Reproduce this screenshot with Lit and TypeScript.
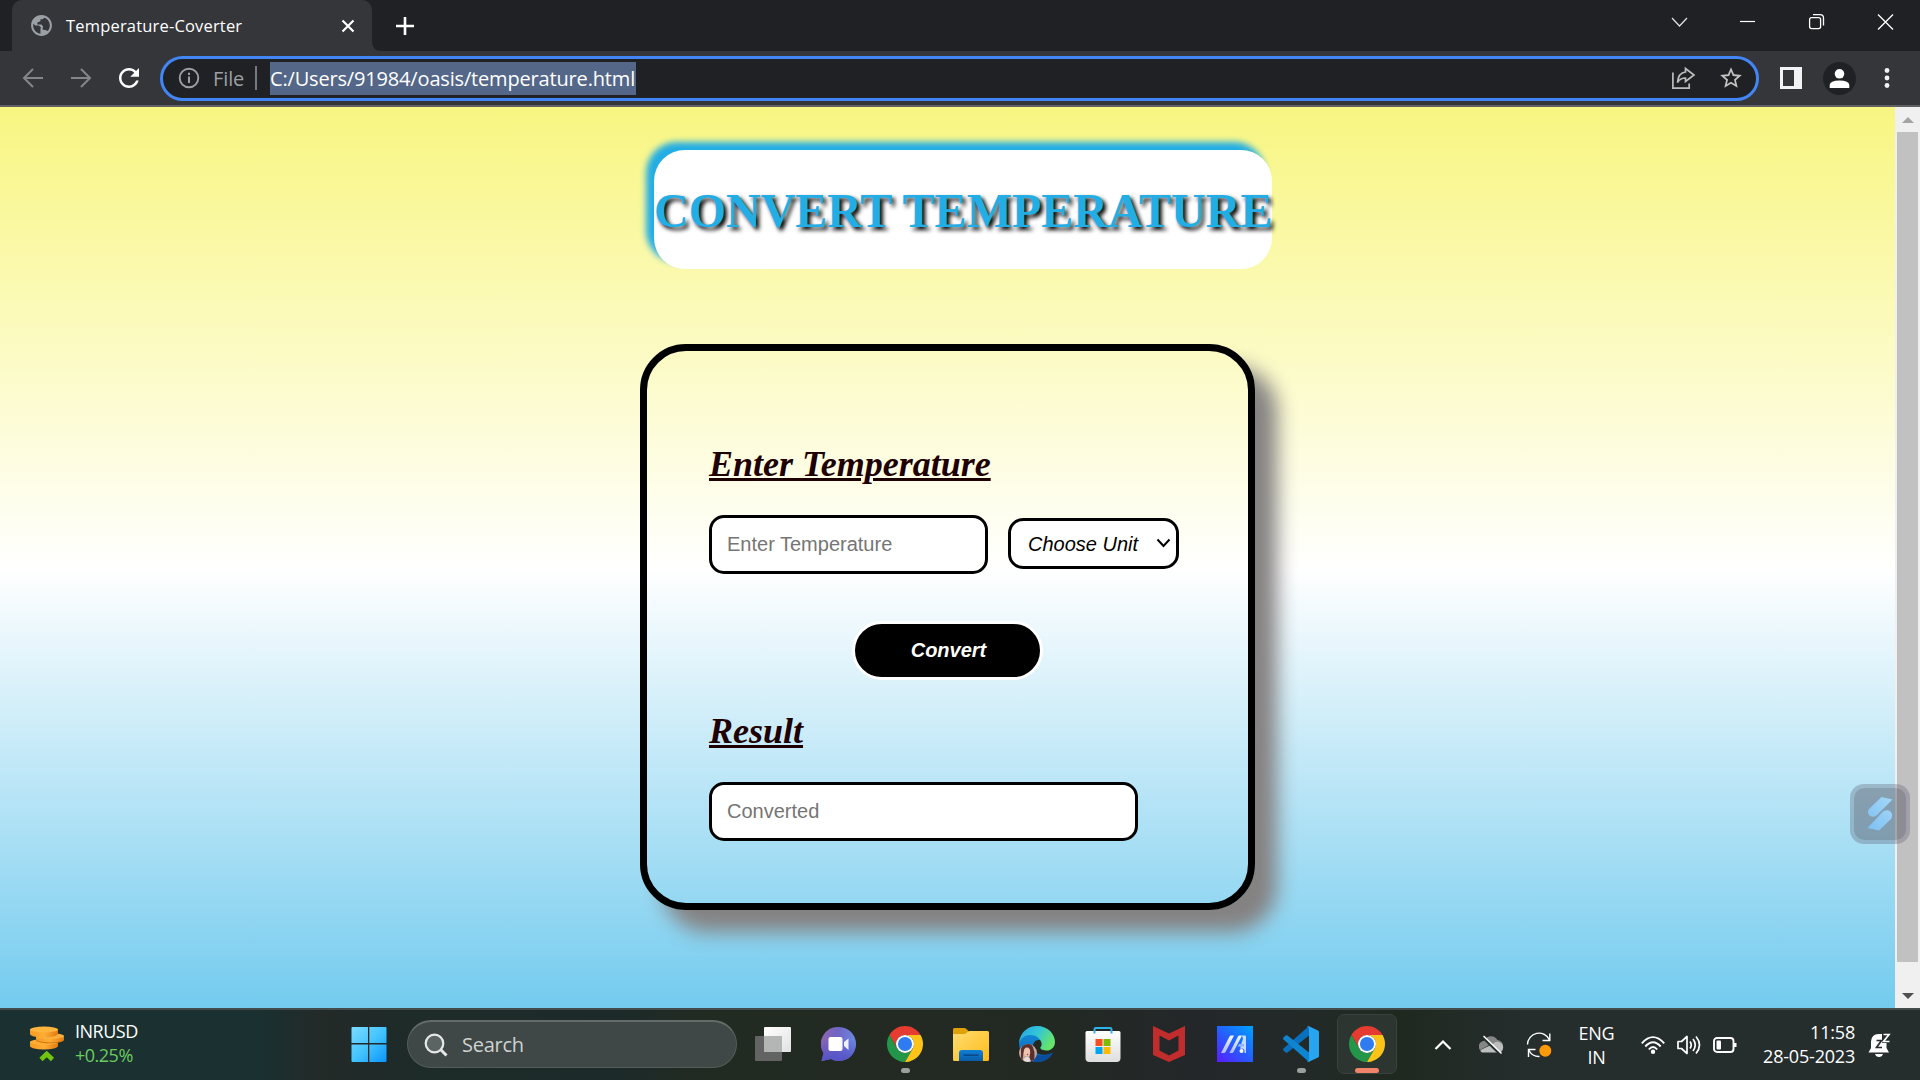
import { LitElement, html, css } from "lit";
import { customElement } from "lit/decorators.js";

const chrome = html`<svg class="app" viewBox="0 0 48 48">
  <path fill="#e53b30" d="M24 12H44.78A24 24 0 0 0 3.22 12L13.61 30A12 12 0 0 1 24 12Z"/>
  <path fill="#23964a" d="M13.61 30L3.22 12A24 24 0 0 0 24 48L34.39 30A12 12 0 0 1 13.61 30Z"/>
  <path fill="#fcc419" d="M34.39 30L24 48A24 24 0 0 0 44.78 12H24A12 12 0 0 1 34.39 30Z"/>
  <circle cx="24" cy="24" r="12" fill="#fff"/><circle cx="24" cy="24" r="9.4" fill="#2f7bf0"/>
</svg>`;

const folder = html`<svg class="app" viewBox="0 0 36 36">
  <defs><linearGradient id="fo" x1="0" y1="0" x2="1" y2="1"><stop offset="0" stop-color="#ffdc72"/><stop offset="1" stop-color="#fdbc18"/></linearGradient>
  <linearGradient id="fb" x1="0" y1="0" x2="0" y2="1"><stop offset="0" stop-color="#0f7fd6"/><stop offset="1" stop-color="#0a5da8"/></linearGradient></defs>
  <path fill="#e0a008" d="M0 3.500Q0 2 1.500 2H11.500Q12.500 2 13.200 2.700L15.500 5V12H0Z"/>
  <path fill="url(#fo)" d="M0 8H11Q12.500 8 13.500 7L14.500 6Q15.500 5 17 5H34.500Q36 5 36 6.500V33.500Q36 35 34.500 35H1.500Q0 35 0 33.500Z"/>
  <path fill="url(#fb)" d="M6 35V27Q6 24 9 24H27Q30 24 30 27V35Z"/>
  <rect x="10.500" y="28.500" width="15" height="1.300" fill="#08437c"/>
</svg>`;

const edge = html`<svg class="app" viewBox="0 0 36 36">
  <defs><linearGradient id="eg" x1="0" y1="0" x2="1" y2=".45"><stop offset="0" stop-color="#2a9fe0"/><stop offset=".5" stop-color="#30c4dc"/><stop offset="1" stop-color="#66e36a"/></linearGradient>
  <linearGradient id="eb" x1="0" y1="0" x2="0" y2="1"><stop offset="0" stop-color="#128ad6"/><stop offset="1" stop-color="#0b5cae"/></linearGradient>
  <clipPath id="ea"><circle cx="9" cy="27" r="9"/></clipPath></defs>
  <path fill="url(#eb)" d="M0 17C1 10 7 7.500 12 8C18 8.500 22 11 22 14.500C17 13 14 16 14 21C14 28 24 31 33.500 27C30 33 25 36 18 36C8 36 0 28 0 17Z"/>
  <path fill="#0c4c9c" d="M12 19C10 28 21 33 34 26.500C31 33 25 36 18 36C13 34 9 27 12 19Z"/>
  <path fill="url(#eg)" d="M0 17C1 6 9 0 18 0C29 0 36 8 36 16C36 22 31 25 27 24.500C23 24.300 21 23 21.300 21.600C22 20.700 23 19.500 22.500 17C21.500 12 16 8.500 11 9C6 9 2 12 0 17Z"/>
  <g clip-path="url(#ea)"><rect y="18" width="18" height="18" fill="#c2a79b"/>
  <path fill="#5b302c" d="M4 18H12Q17 24 15 36H9Q13 29 8 22Q4 24 4 31L3 36H2V23Z"/>
  <ellipse cx="8" cy="26" rx="3.200" ry="4.500" fill="#edc4af"/><path fill="#e8dcd8" d="M4 36Q5 31 8 31Q11 31 12 36Z"/><circle cx="8.500" cy="28.500" r=".8" fill="#a8403e"/></g>
</svg>`;

const store = html`<svg class="app" viewBox="0 0 36 36">
  <defs><linearGradient id="st" x1="0" y1="0" x2="0" y2="1"><stop offset="0" stop-color="#fff"/><stop offset="1" stop-color="#dedede"/></linearGradient></defs>
  <path fill="url(#st)" d="M.5 6.500Q.5 5 2 5H34Q35.500 5 35.500 6.500V32Q35.500 36 31.500 36H4.500Q.5 36 .5 32Z"/>
  <path fill="none" stroke="#2bb3ec" stroke-width="2" d="M9.500 7.500V3.300Q9.500 2 10.800 2H25.200Q26.500 2 26.500 3.300V7.500"/>
  <path fill="#f25022" d="M10.500 13h7v7h-7z"/><path fill="#7fba00" d="M18.500 13h7v7h-7z"/>
  <path fill="#00a4ef" d="M10.500 21h7v7h-7z"/><path fill="#ffb900" d="M18.500 21h7v7h-7z"/>
</svg>`;

const mcafee = html`<svg class="app" viewBox="0 0 36 36">
  <path fill="#c12c2c" fill-rule="evenodd" d="M2 0L18 7.500L34 0V29L18 36L2 29ZM8.500 9.500V24.500L18 29.500L27.500 24.500V9.500L18 14.500Z"/>
</svg>`;

const asus = html`<svg class="app" viewBox="0 0 36 36">
  <defs><linearGradient id="as" x1="0" y1="1" x2=".9" y2="0"><stop offset="0" stop-color="#5a1cff"/><stop offset=".5" stop-color="#265cff"/><stop offset="1" stop-color="#009dff"/></linearGradient>
  <linearGradient id="al" x1="0" y1="1" x2="0" y2="0"><stop offset="0" stop-color="#a9bcff"/><stop offset="1" stop-color="#f4f8ff"/></linearGradient></defs>
  <rect width="36" height="36" fill="url(#as)"/>
  <path fill="url(#al)" d="M4 27L12.500 10.500Q13 9.500 14 9.500H17L8.500 26Q8 27 7 27ZM12.500 27L21 10.500Q21.500 9.500 22.500 9.500H25L16.500 26Q16 27 15 27Z"/>
  <path fill="#c5dcff" d="M25 9.500H28Q29 9.500 29 10.500V27H27.500V24Q26 21.500 23.500 23V20L26 13Z"/>
  <path fill="#8db6ff" d="M22 18H27V20.500H20.700Z"/>
  <circle cx="24.500" cy="25" r="2" fill="#fff"/>
</svg>`;

const vscode = html`<svg class="app" viewBox="0 0 36 36">
  <path fill="#0a70bd" d="M26 0V9.500L4.500 26.500Q3.500 27.200 2.600 26.500L.5 24.500Q-.4 23.500.5 22.500Z"/>
  <path fill="#0f84cf" d="M.5 13.500Q-.4 12.500.5 11.500L2.600 9.500Q3.500 8.800 4.500 9.500L26 26.500V36Z"/>
  <path fill="#27a5f0" d="M26 .3L35 4.500Q36 5 36 6V30Q36 31 35 31.500L26 35.700Q24.500 36 23.500 34.700Q26 35.500 26 33V3Q26 .5 23.500 1.300Q24.500 0 26 .3Z"/>
</svg>`;

const chat = html`<svg class="app" viewBox="0 0 36 36">
  <defs><linearGradient id="ch" x1="0" y1=".4" x2="1" y2=".5"><stop offset="0" stop-color="#8d66b0"/><stop offset=".45" stop-color="#6f64c4"/><stop offset="1" stop-color="#6c8ce6"/></linearGradient>
  <linearGradient id="c2" x1="0" y1="0" x2="0" y2="1"><stop offset=".35" stop-color="#5552c8" stop-opacity="0"/><stop offset="1" stop-color="#5552c8"/></linearGradient></defs>
  <path fill="url(#ch)" d="M18 1A17 17 0 1 1 10 33L.5 35L2.500 27A17 17 0 0 1 18 1Z"/>
  <path fill="url(#c2)" d="M18 1A17 17 0 1 1 10 33L.5 35L2.500 27A17 17 0 0 1 18 1Z"/>
  <rect x="7.500" y="11" width="14" height="14" rx="2" fill="#fff"/><path fill="#f1f1ff" d="M23 16L27.500 12.500V24L23 20Z"/>
</svg>`;

const taskview = html`<svg class="app" viewBox="0 0 36 36">
  <defs><linearGradient id="tv" x1="0" y1="0" x2="1" y2="1"><stop offset="0" stop-color="#fff"/><stop offset="1" stop-color="#e2e2e2"/></linearGradient></defs>
  <rect x="9" y="1" width="27" height="25" rx="1" fill="url(#tv)"/><rect y="10" width="27" height="25" rx="1" fill="#636363"/>
  <rect x="9" y="10" width="18" height="16" fill="#b4b6b5"/>
</svg>`;

const runningApps = [
  { icon: taskview, mark: "" }, { icon: chat, mark: "" }, { icon: chrome, mark: "dot" },
  { icon: folder, mark: "" }, { icon: edge, mark: "" }, { icon: store, mark: "" },
  { icon: mcafee, mark: "" }, { icon: asus, mark: "" }, { icon: vscode, mark: "dot" },
  { icon: chrome, mark: "bar" },
];

@customElement("browser-chrome")
class BrowserChrome extends LitElement {
  static styles = css`
    :host { display: block; font-family: "Open Sans", "Noto Sans", sans-serif; color: #fff; }
    svg { display: block; flex: none; }
    .strip { display: flex; height: 51px; background: #202124; }
    .tab { display: flex; align-items: center; box-sizing: border-box; width: 360px; margin-left: 12px; padding: 0 17px 0 17px; border-radius: 10px 10px 0 0; background: #35363a; }
    .tab-title { flex: 1; margin-left: 12px; font-size: 16.5px; letter-spacing: 0.18px; line-height: 22px; white-space: nowrap; }
    .foot { align-self: flex-end; }
    .plus { align-self: center; margin: 0 0 0 14px; }
    .controls { display: flex; align-items: center; margin-left: auto; height: 43px; }
    .controls svg { width: 69px; height: 20px; }
    .bar { display: flex; align-items: center; height: 54px; background: #35363a; border-bottom: 2px solid #5f6063; }
    .nav { display: flex; width: 160px; box-sizing: border-box; padding-left: 21px; gap: 24px; align-items: center; }
    .reload { margin-left: -3px; }
    .omni { display: flex; align-items: center; box-sizing: border-box; width: 1599px; height: 45px; border: 3px solid #4285f4; border-radius: 23px; background: #202124; padding: 0 12px 0 15px; font-size: 20px; }
    .scheme { width: 42px; margin-left: 13px; color: #9aa0a6; font-size: 20px; letter-spacing: -0.1px; }
    .rule { width: 2px; height: 24px; margin-right: 13px; background: #77797c; }
    .url { display: block; width: 366px; height: 33px; line-height: 33px; background: #546788; white-space: nowrap; letter-spacing: -0.17px; }
    .star { margin-left: 22px; }
    .omni-end { display: flex; align-items: center; margin-left: auto; }
    .panel { margin-left: 21px; }
    .avatar { margin-left: 21px; }
    .more { margin-left: 27px; }
  `;
  render() {
    return html`
      <div class="strip">
        <div class="tab">
          <svg width="25" height="25" viewBox="0 0 24 24"><path fill="#9aa0a6" d="M12 2C6.480 2 2 6.480 2 12s4.480 10 10 10 10-4.480 10-10S17.520 2 12 2zM11 19.930c-3.950-.49-7-3.850-7-7.930 0-.62.08-1.210.21-1.790L6 12H9.500L11.500 14L11 15V18zM17.900 17.390C17 16.500 15.500 16 13 16L13.500 13L12 11H8V9L11 8V6H13L15 4.590c2.930 1.190 5 4.060 5 7.410 0 2.080-.8 3.970-2.100 5.390z"/></svg>
          <span class="tab-title">Temperature-Coverter</span>
          <svg width="14" height="14" viewBox="0 0 14 14"><path d="M1.500 1.500L12.500 12.500M12.500 1.500L1.500 12.500" stroke="#fff" stroke-width="2.200"/></svg>
        </div>
        <svg class="foot" width="10" height="10"><path d="M0 0Q0 10 10 10H0Z" fill="#35363a"/></svg>
        <svg class="plus" width="18" height="18"><path d="M9 0V18M0 9H18" stroke="#fff" stroke-width="2.600"/></svg>
        <div class="controls">
          <svg viewBox="0 0 69 20"><path d="M28 6L35.500 14L43 6" fill="none" stroke="#e4e4e4" stroke-width="1.200"/></svg>
          <svg viewBox="0 0 69 20"><path d="M27 9.500H42" stroke="#fff" stroke-width="1.200"/></svg>
          <svg viewBox="0 0 69 20"><g fill="none" stroke="#fff" stroke-width="1.300"><rect x="27.600" y="5.600" width="11" height="11" rx="2"/><path d="M31 2.600H38Q41.500 2.600 41.500 6V13.500"/></g></svg>
          <svg viewBox="0 0 69 20"><path d="M27 2.500L42 17.500M42 2.500L27 17.500" stroke="#fff" stroke-width="1.300"/></svg>
        </div>
      </div>
      <div class="bar">
        <div class="nav">
          <svg width="24" height="24" viewBox="0 0 24 24"><path d="M22 12H3.500M12 3L3 12L12 21" fill="none" stroke="#85868a" stroke-width="2"/></svg>
          <svg width="24" height="24" viewBox="0 0 24 24"><path d="M2 12H20.500M12 3L21 12L12 21" fill="none" stroke="#85868a" stroke-width="2"/></svg>
          <svg class="reload" width="30" height="30" viewBox="0 0 24 24"><path fill="#fff" d="M17.650 6.350C16.200 4.900 14.210 4 12 4c-4.420 0-7.990 3.580-7.990 8s3.570 8 7.990 8c3.730 0 6.840-2.550 7.730-6h-2.080c-.82 2.330-3.040 4-5.650 4-3.310 0-6-2.690-6-6s2.690-6 6-6c1.660 0 3.140.69 4.220 1.780L13 11h7V4l-2.350 2.350z"/></svg>
        </div>
        <div class="omni">
          <svg width="22" height="22" viewBox="0 0 22 22"><circle cx="11" cy="11" r="9.300" fill="none" stroke="#9aa0a6" stroke-width="1.900"/><path d="M11 9.500V16M11 5.800V8" stroke="#9aa0a6" stroke-width="2"/></svg>
          <span class="scheme">File</span><span class="rule"></span>
          <span class="url">C:/Users/91984/oasis/temperature.html</span>
          <div class="omni-end">
            <svg width="25" height="24" viewBox="0 0 25 24"><g fill="none" stroke="#bdbdbd" stroke-width="1.700"><path d="M1.900 6.500V22.200H18.200V17.500"/><path d="M14.500 2.500L23 9L14.500 15.500V12C10.500 12 8.500 13 6.500 16.500C7 10 10 6.500 14.500 6Z"/></g></svg>
            <svg class="star" width="26" height="26" viewBox="0 0 24 24"><path fill="#c4c4c4" d="M22 9.240l-7.190-.62L12 2 9.190 8.630 2 9.240l5.460 4.730L5.820 21 12 17.270 18.180 21l-1.630-7.030L22 9.240zM12 15.400l-3.760 2.270 1-4.280-3.320-2.880 4.380-.38L12 6.100l1.710 4.040 4.380.38-3.320 2.880 1 4.280L12 15.400z"/></svg>
          </div>
        </div>
        <svg class="panel" width="22" height="22"><path fill="#f1f3f4" fill-rule="evenodd" d="M0 0H22V22H0ZM3 3V19H14V3Z"/></svg>
        <svg class="avatar" width="33" height="33"><circle cx="16.500" cy="16.500" r="16.500" fill="#202124"/><circle cx="16.500" cy="11.800" r="4.800" fill="#fff"/><path fill="#fff" d="M6.700 26V23Q7 18.500 16.500 18.500Q26 18.500 26.300 23V26Z"/></svg>
        <svg class="more" width="8" height="22"><g fill="#f1f3f4"><circle cx="4" cy="3.500" r="2.400"/><circle cx="4" cy="11" r="2.400"/><circle cx="4" cy="18.500" r="2.400"/></g></svg>
      </div>`;
  }
}

@customElement("temperature-page")
class TemperaturePage extends LitElement {
  static styles = css`
    :host { display: flex; height: 901px; }
    .page { width: 1895px; height: 901px; overflow: hidden; background: linear-gradient(#f8f681 0, #ffffff 463px, #6bc8ed 926px); display: flex; flex-direction: column; }
    .title { box-sizing: border-box; width: 618px; height: 119px; margin: 43px 0 75px 654px; padding: 33px 0 31px; border-radius: 31px; background: #fff; box-shadow: -7.5px -7.5px 6px #22ade4; color: #22ade4; font: bold 48px/55px "Liberation Serif", serif; text-shadow: 3px 3px 4px #000; white-space: nowrap; }
    .card { box-sizing: border-box; width: 615px; height: 566px; margin-left: 640px; border: 7px solid #000; border-radius: 46px; padding: 93px 62px 62px; box-shadow: 22px 22px 20px #858282; display: flex; flex-direction: column; align-items: flex-start; }
    h2 { margin: 0 0 31px; font: italic bold 36px/40px "Liberation Serif", serif; color: #1e0000; text-decoration: underline; white-space: nowrap; }
    .row { display: flex; align-items: center; gap: 20px; margin-bottom: 47px; }
    input, .select select { box-sizing: border-box; margin: 0; border: 3px solid #000; border-radius: 15px; background: #fff; font-family: "Liberation Sans", sans-serif; font-size: 20px; }
    input { height: 59px; width: 279px; padding: 0 15px; }
    input::placeholder { color: #757575; }
    .result { width: 429px; }
    .select { display: grid; align-items: center; margin-bottom: 2px; }
    .select > * { grid-area: 1 / 1; }
    .select select { appearance: none; width: 171px; height: 51px; padding: 0 17px; font-style: italic; color: #000; }
    .chev { justify-self: end; margin: 0 8px 1px 0; }
    button { box-sizing: border-box; align-self: center; width: 191px; height: 59px; margin-bottom: 31px; padding: 0 0 0 2px; border: 3px solid #fff; border-radius: 31px; background: #000; color: #fff; font: italic bold 20px/23px "Liberation Sans", sans-serif; }
    .scroll { display: flex; flex-direction: column; align-items: center; width: 25px; background: #f0f0f0; }
    .thumb { width: 21px; height: 830px; margin: 9px 0 31px; background: #c1c1c1; }
    .up { margin-top: 10px; }
    svg { display: block; }
  `;
  render() {
    return html`
      <div class="page">
        <div class="title">CONVERT TEMPERATURE</div>
        <div class="card">
          <h2>Enter Temperature</h2>
          <div class="row">
            <input placeholder="Enter Temperature">
            <div class="select">
              <select><option>Choose Unit</option></select>
              <svg class="chev" width="15" height="10"><path d="M1.500 1.500L7.500 8L13.500 1.500" fill="none" stroke="#000" stroke-width="2"/></svg>
            </div>
          </div>
          <button>Convert</button>
          <h2>Result</h2>
          <input class="result" placeholder="Converted">
        </div>
      </div>
      <div class="scroll">
        <svg class="up" width="12" height="6"><path fill="#a3a3a3" d="M0 6L6 0L12 6Z"/></svg>
        <div class="thumb"></div>
        <svg width="12" height="6"><path fill="#505050" d="M0 0L6 6L12 0Z"/></svg>
      </div>`;
  }
}

@customElement("task-bar")
class TaskBar extends LitElement {
  static styles = css`
    :host { display: flex; box-sizing: border-box; height: 72px; border-top: 2px solid #434c4d; background: linear-gradient(90deg, #1a3031 0, #1a3031 260px, #232a28 320px, #1d2b29 420px, #1c2a29 620px, #222b22 700px, #222923 1060px, #24272a 1200px, #222a27 1330px, #20291f 1400px, #252d2d 1520px, #252d2d 100%); color: #fff; font: 18px/24px "Open Sans", "Noto Sans", sans-serif; }
    svg { display: block; flex: none; }
    .widget { display: flex; width: 339px; box-sizing: border-box; padding: 0 0 0 30px; }
    .coins { margin: 16px 11px 0 0; }
    .quote { padding-top: 9px; letter-spacing: -0.5px; }
    .gain { color: #6ccb5f; }
    .slot { display: flex; flex-direction: column; align-items: center; box-sizing: border-box; width: 60px; height: 60px; margin: 4px 6px 0 0; padding-top: 12px; }
    .app { width: 36px; height: 36px; }
    .slot-bar { border: 1px solid #39423d; border-radius: 7px; background: #2c3530; padding-top: 11px; }
    .dot { width: 9px; height: 5px; margin-top: 6px; border-radius: 3px; background: #9b9f9d; }
    .bar { width: 24px; height: 5px; margin-top: 6px; border-radius: 3px; background: #f2836a; }
    .search { display: flex; align-items: center; box-sizing: border-box; width: 330px; height: 48px; margin: 10px 6px 0 2px; padding-left: 16px; border: 1px solid #545c5b; border-top: 2px solid #646b69; border-radius: 24px; background: #3f4846; color: #d0d2d1; font-size: 20px; letter-spacing: -0.25px; }
    .search svg { margin-right: 14px; }
    .tray { display: flex; align-items: center; height: 64px; margin: 3px 0 0 16px; }
    .cell { display: flex; justify-content: center; width: 48px; }
    .lang { width: 67px; text-align: center; letter-spacing: -0.2px; }
    .status { display: flex; gap: 12px; margin-left: 11px; }
    .clock { width: 112px; text-align: right; margin: -3px 13px 0 6px; letter-spacing: -0.2px; }
  `;
  render() {
    return html`
      <div class="widget">
        <svg class="coins" width="34" height="36" viewBox="0 0 34 36">
          <defs><linearGradient id="co" x1="0" y1="0" x2="1" y2="0"><stop offset="0" stop-color="#f59a22"/><stop offset=".5" stop-color="#ffad36"/><stop offset="1" stop-color="#e07c10"/></linearGradient></defs>
          <path fill="url(#co)" d="M0 16V20A14 3.500 0 0 0 28 20V16Z"/><ellipse cx="14" cy="16" rx="14" ry="3" fill="#ffae35"/>
          <path fill="#c96b0c" d="M6 12V14.500A14 3.500 0 0 0 34 13V11Z"/>
          <path fill="url(#co)" d="M6 10V13A14 3.500 0 0 0 34 13V10Z"/><ellipse cx="20" cy="10" rx="14" ry="3" fill="#ffb03a"/>
          <path fill="url(#co)" d="M0 3.500V8A14 3.500 0 0 0 28 8V3.500Z"/><ellipse cx="14" cy="3.500" rx="14" ry="3" fill="#ffb53d"/>
          <path d="M11 33.500L16.700 28L22.500 33.500" fill="none" stroke="#6fc512" stroke-width="4.600"/>
        </svg>
        <div class="quote"><div>INRUSD</div><div class="gain">+0.25%</div></div>
      </div>
      <div class="slot">
        <svg class="app" viewBox="0 0 36 36">
          <defs><linearGradient id="wi" gradientUnits="userSpaceOnUse" x1="0" y1="0" x2="36" y2="36"><stop offset="0" stop-color="#7fdcff"/><stop offset=".5" stop-color="#45c5fd"/><stop offset="1" stop-color="#0a94fb"/></linearGradient></defs>
          <path fill="url(#wi)" d="M1.500 1H17V17H.5V2Q.5 1 1.500 1ZM18.300 1H34.500Q35.500 1 35.500 2V17H18.300ZM.5 18.500H17V36H1.500Q.5 36 .5 35ZM18.300 18.500H35.500V35Q35.500 36 34.500 36H18.300Z"/>
        </svg>
      </div>
      <div class="search">
        <svg width="24" height="24" viewBox="0 0 24 24"><g fill="none" stroke="#e6e8e7" stroke-width="2.200"><circle cx="10.500" cy="10.500" r="8.800" fill="#5c6463"/><path d="M16.800 16.800L22.500 22.500" stroke-width="3"/></g></svg>
        <span>Search</span>
      </div>
      ${runningApps.map(({ icon, mark }) => html`
        <div class="slot ${mark === "bar" ? "slot-bar" : ""}">${icon}${mark ? html`<div class=${mark}></div>` : ""}</div>`)}
      <div class="tray">
        <div class="cell"><svg width="18" height="12"><path d="M1.500 10L9 2.500L16.500 10" fill="none" stroke="#fff" stroke-width="2.200"/></svg></div>
        <div class="cell"><svg width="25" height="20" viewBox="0 0 25 20">
          <path fill="#858786" d="M1 15A5.500 5.500 0 0 1 5 6A7.500 7.500 0 0 1 18.500 5A6 6 0 0 1 24 12Q17 15 12 9Z"/>
          <path fill="#bcbebd" d="M3 17.500Q1 16.500 1.500 15L14 9Q17 5.500 21 7.500Q25 10 24 14Q23 17.500 19 17.500Z"/>
          <path d="M3.500 2L21.500 19.500" stroke="#252d2d" stroke-width="2.500"/><path d="M4.500 1L22.500 18.500" stroke="#fff" stroke-width="1.500"/></svg></div>
        <div class="cell"><svg width="26" height="26" viewBox="0 0 26 26"><g fill="none" stroke="#fff" stroke-width="1.400"><path d="M1.500 12.500A11.500 11.500 0 0 1 23.500 8M23.800 1.500V8.500H16.500M13.500 24.500A11.500 11.500 0 0 1 3 18.500M2.500 25V17.500H9.500"/></g><circle cx="19.300" cy="18.800" r="6" fill="#ff9b0a"/></svg></div>
        <div class="lang"><div>ENG</div><div>IN</div></div>
        <div class="status">
          <svg width="24" height="20" viewBox="0 0 24 20"><g fill="none" stroke="#fff" stroke-width="1.900"><path d="M.8 8.300Q12-4 23.200 8.300M4.300 11.500Q12 3 19.700 11.500M7.800 14.500Q12 9.500 16.200 14.500"/></g><circle cx="12" cy="16.700" r="2.200" fill="#fff"/></svg>
          <svg width="24" height="20" viewBox="0 0 24 20"><g fill="none" stroke="#fff" stroke-width="1.700"><path d="M1 6.500H4.500L10 1.500V18.500L4.500 13.500H1Z" stroke-linejoin="round"/><path d="M13 6.500Q15.500 10 13 13.500M16 4Q20.500 10 16 16M19 1.500Q26 10 19 18.500"/></g></svg>
          <svg width="24" height="20" viewBox="0 0 24 20"><rect x="1" y="3" width="19.500" height="14" rx="3" fill="none" stroke="#fff" stroke-width="1.900"/><rect x="3.500" y="5.500" width="4.500" height="9" rx="1" fill="#fff"/><path d="M22 8V12" stroke="#fff" stroke-width="3"/></svg>
        </div>
        <div class="clock"><div>11:58</div><div>28-05-2023</div></div>
        <svg width="24" height="24" viewBox="0 0 24 24"><path fill="#fff" d="M.5 19.500L3 15V8.500Q3.500 1 10.500 1H14V10H18.500V15L21 19.500ZM7 21H15Q14 24 11 24Q8 24 7 21Z"/><path d="M8.500 7.500H13.500L8.500 14.500H14" fill="none" stroke="#252d2d" stroke-width="1.700"/><path d="M15.500 1.500H21L15.500 8.500H21.500" fill="none" stroke="#fff" stroke-width="1.700"/></svg>
      </div>`;
  }
}

@customElement("app-root")
class AppRoot extends LitElement {
  static styles = css`
    :host { display: block; position: relative; width: 1920px; height: 1080px; overflow: hidden; }
    .badge { position: absolute; left: 1850px; top: 784px; box-sizing: border-box; width: 60px; height: 60px; border: 4px solid rgba(90, 90, 110, 0.32); border-radius: 14px; background: rgba(80, 80, 95, 0.47); background-clip: padding-box; display: grid; place-items: center; }
  `;
  render() {
    return html`
      <browser-chrome></browser-chrome>
      <temperature-page></temperature-page>
      <task-bar></task-bar>
      <div class="badge"><svg width="26" height="36" viewBox="0 0 26 36">
        <defs><linearGradient id="sa" x1="1" y1="0" x2="0" y2="1"><stop offset="0" stop-color="#a5d7f8"/><stop offset="1" stop-color="#7dc0f2"/></linearGradient></defs>
        <path fill="url(#sa)" d="M14.500 1L25.500 3.500L10 19Q7 22 3 20Q-.5 17 2 13ZM.5 32L16 15.500Q20 13 23.500 15.500Q26.500 19 24 23L12 34.500Z"/></svg></div>`;
  }
}
